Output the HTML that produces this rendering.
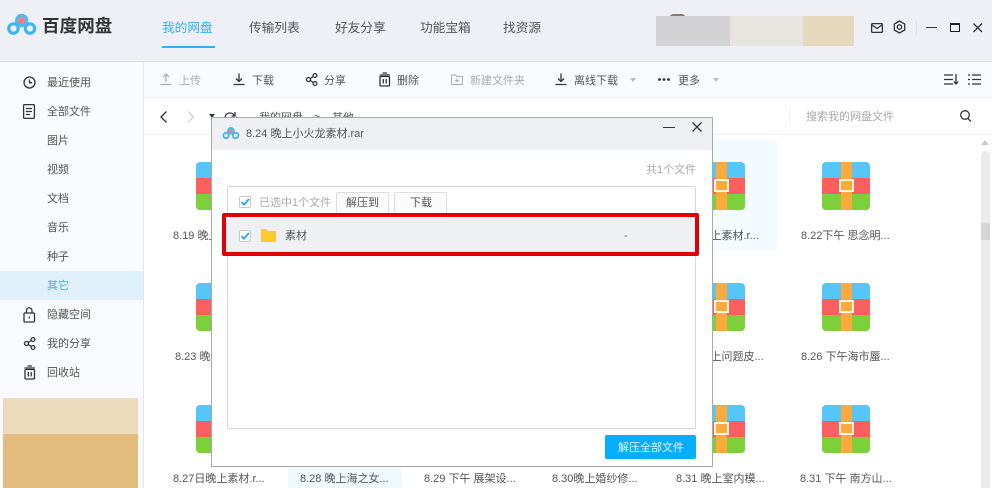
<!DOCTYPE html>
<html lang="zh"><head><meta charset="utf-8"><style>
*{box-sizing:border-box}
html,body{margin:0;padding:0;width:992px;height:488px;overflow:hidden;background:#fff}
body{font-family:"Liberation Sans","Noto Sans CJK SC",sans-serif;color:#555;position:relative}
.a{position:absolute}
.t{position:absolute;white-space:nowrap;line-height:16px;font-size:11px;margin-top:1px}
svg{position:absolute;overflow:visible}
.ic{fill:none;stroke:#333;stroke-width:1.3}
.rar{position:absolute;width:48px;height:48px;border-radius:4px;overflow:hidden;background:#56c6f8}
.rar i{position:absolute;display:block}
.rar .r{left:0;top:16px;width:48px;height:16px;background:#fd5f5f}
.rar .g{left:0;top:32px;width:48px;height:16px;background:#7ed03b}
.rar .o{left:19px;top:0;width:11px;height:48px;background:#fbaa3b}
.rar .b{left:17px;top:17px;width:15px;height:13px;background:#fbaa3b;border:2.5px solid #fff6e8}
.lb{position:absolute;font-size:11px;line-height:16px;white-space:nowrap;color:#555;margin-top:1px}
</style></head><body>
<!-- header -->
<div class="a" style="left:0;top:0;width:992px;height:62px;background:#eef0f6;border-bottom:1px solid #d8dce4"></div>
<svg style="left:7px;top:12px" width="30" height="26" viewBox="0 0 30 26"><circle cx="6.500" cy="16.500" r="4.700" fill="none" stroke="#3db5ee" stroke-width="3.200"/><circle cx="23" cy="16.500" r="4.700" fill="none" stroke="#3db5ee" stroke-width="3.200"/><circle cx="14.700" cy="8.500" r="5.200" fill="#f0808e" stroke="#4dbcee" stroke-width="3"/></svg>
<div class="t" style="left:42px;top:14px;font-size:17.500px;line-height:22px;color:#333;font-weight:700;letter-spacing:.1px">百度网盘</div>
<div class="t" style="left:162px;top:19px;font-size:12.700px;color:#2db2f0">我的网盘</div>
<div class="a" style="left:162px;top:46px;width:53px;height:2px;background:#2db2f0"></div>
<div class="t" style="left:249px;top:19px;font-size:12.700px;color:#555">传输列表</div>
<div class="t" style="left:335px;top:19px;font-size:12.700px;color:#555">好友分享</div>
<div class="t" style="left:420px;top:19px;font-size:12.700px;color:#555">功能宝箱</div>
<div class="t" style="left:503px;top:19px;font-size:12.700px;color:#555">找资源</div>
<div class="a" style="left:670px;top:14px;width:15px;height:3px;background:#8d7a6c;border-radius:8px 8px 0 0"></div>
<div class="a" style="left:656px;top:16px;width:74px;height:30px;background:#d3d2d4"></div>
<div class="a" style="left:730px;top:16px;width:73px;height:30px;background:#e8e5e1"></div>
<div class="a" style="left:803px;top:16px;width:51px;height:30px;background:#e5d8bc"></div>
<svg style="left:871px;top:23px" width="12" height="10"><rect x=".6" y=".6" width="10.800" height="8.800" rx="1" class="ic"/><path d="M1 2l5 3.500L11 2" class="ic"/></svg>
<svg style="left:893px;top:20px" width="13" height="14"><path d="M6.500 1l5.200 3v6l-5.200 3-5.200-3V4z" class="ic"/><circle cx="6.500" cy="7" r="2.200" class="ic"/></svg>
<div class="a" style="left:916px;top:21px;width:1px;height:14px;background:#dcdfe6"></div>
<div class="a" style="left:926px;top:27px;width:11px;height:1px;background:#333"></div>
<div class="a" style="left:950px;top:23px;width:10px;height:9px;border:1px solid #222;border-top-width:2px"></div>
<svg style="left:973px;top:23px" width="10" height="10"><path d="M.5.500l8.500 8.500M9 .5L.5 9" class="ic"/></svg>
<!-- sidebar -->
<div class="a" style="left:0;top:62px;width:144px;height:426px;background:#f8fafd;border-right:1px solid #e3e6ec"></div>
<div class="a" style="left:0;top:271px;width:143px;height:29px;background:#e1f1fc"></div>
<svg style="left:23px;top:76px" width="13" height="13"><circle cx="6.500" cy="6.500" r="5.500" class="ic"/><path d="M6.500 3.500v3.200h2.500" class="ic"/></svg>
<svg style="left:23px;top:104px" width="12" height="15"><rect x=".6" y=".6" width="10.800" height="13.800" rx="1" class="ic"/><path d="M3 4.500h6M3 7.500h6M3 10.500h4" class="ic"/></svg>
<svg style="left:23px;top:307px" width="13" height="16"><rect x="1" y="6" width="10.500" height="9" rx="1" class="ic"/><path d="M3.500 6V3.500a2.700 2.700 0 015.500 0V6M6.300 9.500v2" class="ic"/></svg>
<svg style="left:24px;top:337px" width="12" height="13"><circle cx="2.500" cy="6.500" r="2" class="ic"/><circle cx="9" cy="2.500" r="1.900" class="ic"/><circle cx="9" cy="10.500" r="1.900" class="ic"/><path d="M4.300 5.500l3-2M4.300 7.500l3 2" class="ic"/></svg>
<svg style="left:24px;top:365px" width="12" height="15"><path d="M.5 3h10.500M3.500 1h4.500" class="ic"/><rect x="1" y="4.500" width="9.500" height="9.500" rx="1" class="ic"/><path d="M4.300 7v4.500M7.200 7v4.500" class="ic"/></svg>
<div class="t" style="left:47px;top:74px">最近使用</div>
<div class="t" style="left:47px;top:103px">全部文件</div>
<div class="t" style="left:47px;top:132px">图片</div>
<div class="t" style="left:47px;top:161px">视频</div>
<div class="t" style="left:47px;top:190px">文档</div>
<div class="t" style="left:47px;top:219px">音乐</div>
<div class="t" style="left:47px;top:248px">种子</div>
<div class="t" style="left:47px;top:277px;color:#2db2f0">其它</div>
<div class="t" style="left:47px;top:306px">隐藏空间</div>
<div class="t" style="left:47px;top:335px">我的分享</div>
<div class="t" style="left:47px;top:364px">回收站</div>
<div class="a" style="left:3px;top:398px;width:135px;height:36px;background:#ecdabd"></div>
<div class="a" style="left:3px;top:434px;width:135px;height:54px;background:#e3bb7c"></div>
<!-- toolbar -->
<div class="a" style="left:144px;top:62px;width:848px;height:36px;background:#f9fbfe;border-bottom:1px solid #eceef2"></div>
<svg style="left:160px;top:73px" width="12" height="13"><path d="M6 9V1.500M3 4l3-3 3 3M.5 11.500h11" fill="none" stroke="#aaa" stroke-width="1.200"/></svg>
<div class="t" style="left:179px;top:72px;color:#aaa">上传</div>
<svg style="left:233px;top:73px" width="12" height="13"><path d="M6 .5V8M3 5.500L6 8.500l3-3M.5 11.500h11" class="ic"/></svg>
<div class="t" style="left:252px;top:72px">下载</div>
<svg style="left:306px;top:73px" width="12" height="13"><circle cx="2.500" cy="6.500" r="2" class="ic"/><circle cx="9" cy="2.500" r="1.900" class="ic"/><circle cx="9" cy="10.500" r="1.900" class="ic"/><path d="M4.300 5.500l3-2M4.300 7.500l3 2" class="ic"/></svg>
<div class="t" style="left:324px;top:72px">分享</div>
<svg style="left:379px;top:72px" width="12" height="15"><path d="M.5 3h10.500M3.500 1h4.500" class="ic"/><rect x="1" y="4.500" width="9.500" height="9.500" rx="1" class="ic"/><path d="M4.300 7v4.500M7.200 7v4.500" class="ic"/></svg>
<div class="t" style="left:397px;top:72px">删除</div>
<svg style="left:451px;top:74px" width="12" height="11"><path d="M.6 1h4l1 1.500h5.800v8H.6zM6 4.500v4M4 6.500h4" fill="none" stroke="#aaa" stroke-width="1"/></svg>
<div class="t" style="left:470px;top:72px;color:#aaa">新建文件夹</div>
<svg style="left:555px;top:73px" width="12" height="13"><path d="M6 .5V8M3 5.500L6 8.500l3-3M.5 11.500h11" class="ic"/></svg>
<div class="t" style="left:574px;top:72px">离线下载</div>
<svg style="left:630px;top:78px" width="6" height="4"><path d="M0 0h6L3 4z" fill="#bbb"/></svg>
<svg style="left:658px;top:78px" width="12" height="3"><circle cx="1.500" cy="1.500" r="1.400" fill="#333"/><circle cx="6" cy="1.500" r="1.400" fill="#333"/><circle cx="10.500" cy="1.500" r="1.400" fill="#333"/></svg>
<div class="t" style="left:678px;top:72px">更多</div>
<svg style="left:713px;top:78px" width="6" height="4"><path d="M0 0h6L3 4z" fill="#bbb"/></svg>
<svg style="left:944px;top:74px" width="15" height="11"><path d="M0 1h9M0 5.500h9M0 10h9M12 0v9.500M9.800 7.500l2.200 2.500 2.200-2.500" class="ic"/></svg>
<svg style="left:968px;top:74px" width="13" height="11"><path d="M4 1h9M4 5.500h9M4 10h9M0 1h2M0 5.500h2M0 10h2" class="ic"/></svg>
<!-- nav bar -->
<div class="a" style="left:144px;top:98px;width:848px;height:37px;background:#fff;border-bottom:1px solid #eceef2"></div>
<svg style="left:160px;top:111px" width="8" height="12"><path d="M6.500.5L1 6l5.500 5.500" class="ic"/></svg>
<svg style="left:187px;top:111px" width="8" height="12"><path d="M1 .5L6.500 6 1 11.500" fill="none" stroke="#ccc" stroke-width="1.200"/></svg>
<svg style="left:209px;top:114px" width="6" height="4"><path d="M0 0h6L3 4z" fill="#333"/></svg>
<svg style="left:224px;top:110px" width="12" height="8"><path d="M1 7a5 5 0 019.500-1M11 2v4H7.500" class="ic"/></svg>
<div class="t" style="left:259px;top:109px">我的网盘</div>
<div class="t" style="left:314px;top:109px">&gt;</div>
<div class="t" style="left:332px;top:109px">其他</div>
<div class="a" style="left:789px;top:108px;width:1px;height:16px;background:#eceef2"></div>
<div class="t" style="left:806px;top:108px;color:#aaa">搜索我的网盘文件</div>
<svg style="left:960px;top:110px" width="12" height="13"><circle cx="5" cy="5" r="4.300" class="ic"/><path d="M8 8.500l3 3" class="ic"/></svg>
<!-- scrollbar -->
<div class="a" style="left:981px;top:151px;width:9px;height:337px;background:#ebebeb;border-radius:5px 5px 0 0"></div>
<div class="a" style="left:981px;top:223px;width:9px;height:17px;background:#d4d4d4"></div>
<svg style="left:981px;top:140px" width="8" height="5"><path d="M0 5L4 0l4 5z" fill="#ccc"/></svg>
<!-- selected bgs -->
<div class="a" style="left:652px;top:140px;width:125px;height:110px;background:#f3fbff"></div>
<div class="a" style="left:288px;top:468px;width:114px;height:20px;background:#f0f9fe"></div>
<!-- rar icons -->
<div class="rar" style="left:196px;top:162px"><i class="r"></i><i class="g"></i><i class="o"></i><i class="b"></i></div>
<div class="rar" style="left:697px;top:162px"><i class="r"></i><i class="g"></i><i class="o"></i><i class="b"></i></div>
<div class="rar" style="left:822px;top:162px"><i class="r"></i><i class="g"></i><i class="o"></i><i class="b"></i></div>
<div class="rar" style="left:196px;top:283px"><i class="r"></i><i class="g"></i><i class="o"></i><i class="b"></i></div>
<div class="rar" style="left:697px;top:283px"><i class="r"></i><i class="g"></i><i class="o"></i><i class="b"></i></div>
<div class="rar" style="left:822px;top:283px"><i class="r"></i><i class="g"></i><i class="o"></i><i class="b"></i></div>
<div class="rar" style="left:196px;top:405px"><i class="r"></i><i class="g"></i><i class="o"></i><i class="b"></i></div>
<div class="rar" style="left:697px;top:405px"><i class="r"></i><i class="g"></i><i class="o"></i><i class="b"></i></div>
<div class="rar" style="left:822px;top:405px"><i class="r"></i><i class="g"></i><i class="o"></i><i class="b"></i></div>
<!-- labels -->
<div class="lb" style="left:173px;top:227px">8.19 晚上素材</div>
<div class="lb" style="left:675px;top:227px">8.21 晚上素材.r...</div>
<div class="lb" style="left:801px;top:227px">8.22下午 思念明...</div>
<div class="lb" style="left:175px;top:348px">8.23 晚上素材</div>
<div class="lb" style="left:675px;top:348px">8.25 晚上问题皮...</div>
<div class="lb" style="left:801px;top:348px">8.26 下午海市蜃...</div>
<div class="lb" style="left:173px;top:470px">8.27日晚上素材.r...</div>
<div class="lb" style="left:300px;top:470px">8.28 晚上海之女...</div>
<div class="lb" style="left:424px;top:470px">8.29 下午 展架设...</div>
<div class="lb" style="left:552px;top:470px">8.30晚上婚纱修...</div>
<div class="lb" style="left:676px;top:470px">8.31 晚上室内模...</div>
<div class="lb" style="left:800px;top:470px">8.31 下午 南方山...</div>
<!-- dialog -->
<div class="a" style="left:211px;top:117px;width:502px;height:350px;background:#fff;border:1px solid #a8a8a8"></div>
<div class="a" style="left:212px;top:118px;width:500px;height:32px;background:#eff0f4"></div>
<svg style="left:222px;top:126px" width="18" height="15" viewBox="0 0 30 26"><circle cx="6.500" cy="16.500" r="4.700" fill="none" stroke="#3db5ee" stroke-width="3.200"/><circle cx="23" cy="16.500" r="4.700" fill="none" stroke="#3db5ee" stroke-width="3.200"/><circle cx="14.700" cy="8.500" r="5.200" fill="#f0808e" stroke="#4dbcee" stroke-width="3"/></svg>
<div class="t" style="left:246px;top:125px;color:#555">8.24 晚上小火龙素材.rar</div>
<div class="a" style="left:663px;top:127px;width:12px;height:1px;background:#333"></div>
<svg style="left:692px;top:122px" width="10" height="10"><path d="M.5.500l9 9M9.500.5l-9 9" class="ic"/></svg>
<div class="t" style="left:646px;top:161px;color:#aaa">共1个文件</div>
<div class="a" style="left:227px;top:186px;width:469px;height:243px;border:1px solid #d8d8d8;border-radius:2px"></div>
<div class="a" style="left:239px;top:196px;width:12px;height:12px;border:1px solid #c8c8c8;border-radius:2px;background:#fff"></div>
<svg style="left:241px;top:198px" width="9" height="8"><path d="M.5 4l2.500 2.700L8 1" fill="none" stroke="#1ea7f2" stroke-width="1.800"/></svg>
<div class="t" style="left:259px;top:194px;color:#aaa">已选中1个文件</div>
<div class="a" style="left:336px;top:192px;width:53px;height:22px;background:#fbfbfb;border:1px solid #dedede;border-radius:2px 2px 0 0"></div>
<div class="t" style="left:346px;top:194px;color:#555">解压到</div>
<div class="a" style="left:394px;top:192px;width:53px;height:22px;background:#fbfbfb;border:1px solid #dedede;border-radius:2px 2px 0 0"></div>
<div class="t" style="left:410px;top:194px;color:#555">下载</div>
<div class="a" style="left:222px;top:213px;width:477px;height:43px;background:#eff0f4;border:4px solid #e00008;border-radius:2px"></div>
<div class="a" style="left:239px;top:230px;width:12px;height:12px;border:1px solid #c8c8c8;border-radius:2px;background:#fff"></div>
<svg style="left:241px;top:232px" width="9" height="8"><path d="M.5 4l2.500 2.700L8 1" fill="none" stroke="#1ea7f2" stroke-width="1.800"/></svg>
<svg style="left:261px;top:229px" width="15" height="13"><path d="M0 1a1 1 0 011-1h4l2 2h7a1 1 0 011 1v9a1 1 0 01-1 1H1a1 1 0 01-1-1z" fill="#fbcb2d"/></svg>
<div class="t" style="left:285px;top:227px;color:#555">素材</div>
<div class="t" style="left:624px;top:227px;color:#666">-</div>
<div class="a" style="left:605px;top:435px;width:91px;height:24px;background:#06aeff;border-radius:2px"></div>
<div class="t" style="left:618px;top:439px;color:#e8f7ff">解压全部文件</div>
</body></html>
